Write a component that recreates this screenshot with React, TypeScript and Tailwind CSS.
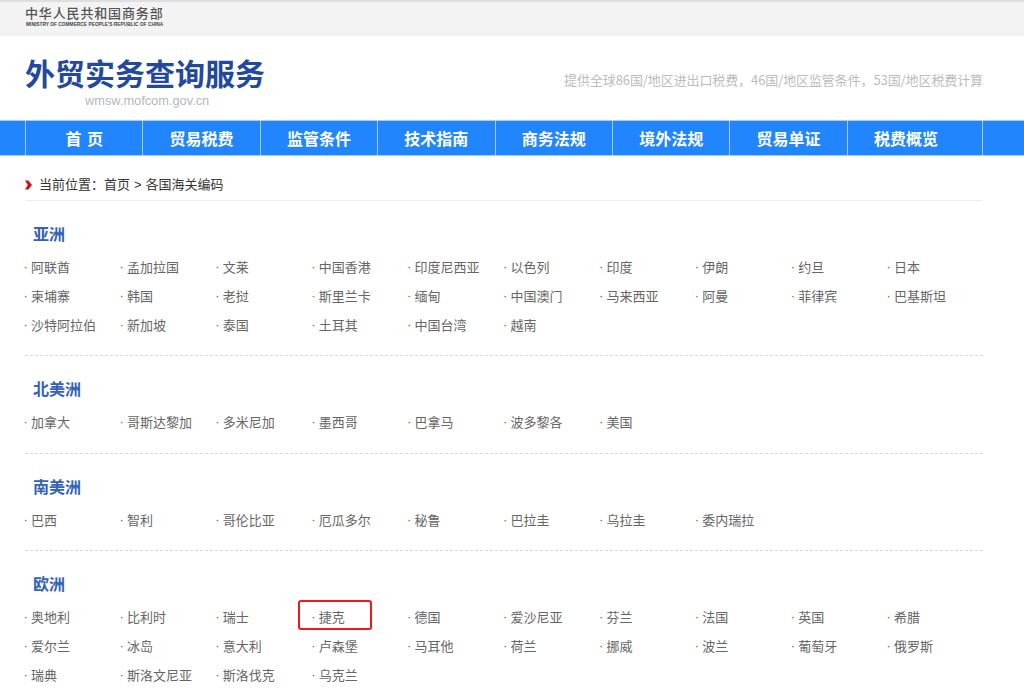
const FONT = "font-['Noto_Sans_CJK_SC','Liberation_Sans',sans-serif]";

const NAV = ["首 页", "贸易税费", "监管条件", "技术指南", "商务法规", "境外法规", "贸易单证", "税费概览"];

const REGIONS = [
  {
    name: "亚洲",
    items: [
      "阿联酋", "孟加拉国", "文莱", "中国香港", "印度尼西亚", "以色列", "印度", "伊朗", "约旦", "日本",
      "柬埔寨", "韩国", "老挝", "斯里兰卡", "缅甸", "中国澳门", "马来西亚", "阿曼", "菲律宾", "巴基斯坦",
      "沙特阿拉伯", "新加坡", "泰国", "土耳其", "中国台湾", "越南",
    ],
  },
  { name: "北美洲", items: ["加拿大", "哥斯达黎加", "多米尼加", "墨西哥", "巴拿马", "波多黎各", "美国"] },
  { name: "南美洲", items: ["巴西", "智利", "哥伦比亚", "厄瓜多尔", "秘鲁", "巴拉圭", "乌拉圭", "委内瑞拉"] },
  {
    name: "欧洲",
    items: [
      "奥地利", "比利时", "瑞士", "捷克", "德国", "爱沙尼亚", "芬兰", "法国", "英国", "希腊",
      "爱尔兰", "冰岛", "意大利", "卢森堡", "马耳他", "荷兰", "挪威", "波兰", "葡萄牙", "俄罗斯",
      "瑞典", "斯洛文尼亚", "斯洛伐克", "乌克兰",
    ],
  },
];

const App = () => {
  return (
    <div className={`${FONT} w-[1024px] h-[693px] overflow-hidden bg-white`}>
      {/* Top strip */}
      <div className="h-9 bg-[#f3f3f3] border-t-2 border-[#dedede] px-[25px] pt-[3px]">
        <p className="text-[13px] leading-[16px] font-medium tracking-[0.85px] text-[#555] whitespace-nowrap">
          中华人民共和国商务部
        </p>
        <p className="font-['Liberation_Sans',sans-serif] text-[4.85px] leading-[8px] font-bold text-[#444] pl-px whitespace-nowrap">
          MINISTRY OF COMMERCE PEOPLE'S REPUBLIC OF CHINA
        </p>
      </div>

      {/* Header */}
      <div className="h-[84px] flex justify-between pl-[25px] pr-[41px]">
        <div className="pt-[15px]">
          <h1 className="text-[30px] leading-[42px] font-bold text-[#23499d] whitespace-nowrap">外贸实务查询服务</h1>
          <p className="font-['Liberation_Sans',sans-serif] text-[12.8px] leading-[16px] text-[#b5b8bd] pl-[60px]">
            wmsw.mofcom.gov.cn
          </p>
        </div>
        <p className="pt-[34px] text-[13px] leading-[20px] tracking-[-0.1px] text-[#bcbcbc] whitespace-nowrap">
          提供全球86国/地区进出口税费，46国/地区监管条件，53国/地区税费计算
        </p>
      </div>

      {/* Nav */}
      <div className="h-9 bg-[#2185fd] border-y border-[#a8cdfb] px-[25px]">
        <ul className="flex h-full w-[958px] border-r border-[#a8cdfb]">
          {NAV.map((label) => (
            <li
              key={label}
              className="w-[117.4px] flex items-center justify-center border-l border-[#a8cdfb] text-[16px] font-bold text-white whitespace-pre [word-spacing:2px]"
            >
              {label}
            </li>
          ))}
        </ul>
      </div>

      {/* Content */}
      <div className="px-[25px] w-[1008px]">
        <div className="h-[44.5px] flex items-center gap-[7px] border-b border-[#eeeeee] pt-[12px]">
          <svg width="7" height="10" viewBox="0 0 7 10" className="shrink-0 translate-y-px">
            <path d="M0 0.5 L3.4 0.5 L7 5 L3.4 9.5 L0 9.5 L2.8 5 Z" fill="#cc1418" />
          </svg>
          <p className="text-[13px] text-[#333] whitespace-nowrap">
            当前位置：首页
            <span className="font-['Liberation_Sans',sans-serif] mx-[4px]">&gt;</span>
            各国海关编码
          </p>
        </div>

        {REGIONS.map((region, i) => (
          <section
            key={region.name}
            className={`pb-[16.5px] ${i < REGIONS.length - 1 ? "border-b border-dashed border-[#d8d8d8]" : ""}`}
          >
            <h2 className="pl-2 pt-[19px] h-[51px] text-[16px] leading-[27px] font-bold text-[#3263b8]">{region.name}</h2>
            <ul className="grid grid-cols-10 w-[959px]">
              {region.items.map((item) => (
                <li key={item} className="relative flex h-[29px] text-[13px] leading-[29px] text-[#666] whitespace-nowrap">
                  <span className="font-['Liberation_Sans',sans-serif] ml-[-1.5px] w-[7.5px]">·</span>
                  {item}
                  {item === "捷克" && (
                    <span className="absolute left-[-15px] top-[-2.5px] w-[74px] h-[30.5px] border-2 border-[#f01818] rounded-[3px]" />
                  )}
                </li>
              ))}
            </ul>
          </section>
        ))}
      </div>
    </div>
  );
};

export default App;
